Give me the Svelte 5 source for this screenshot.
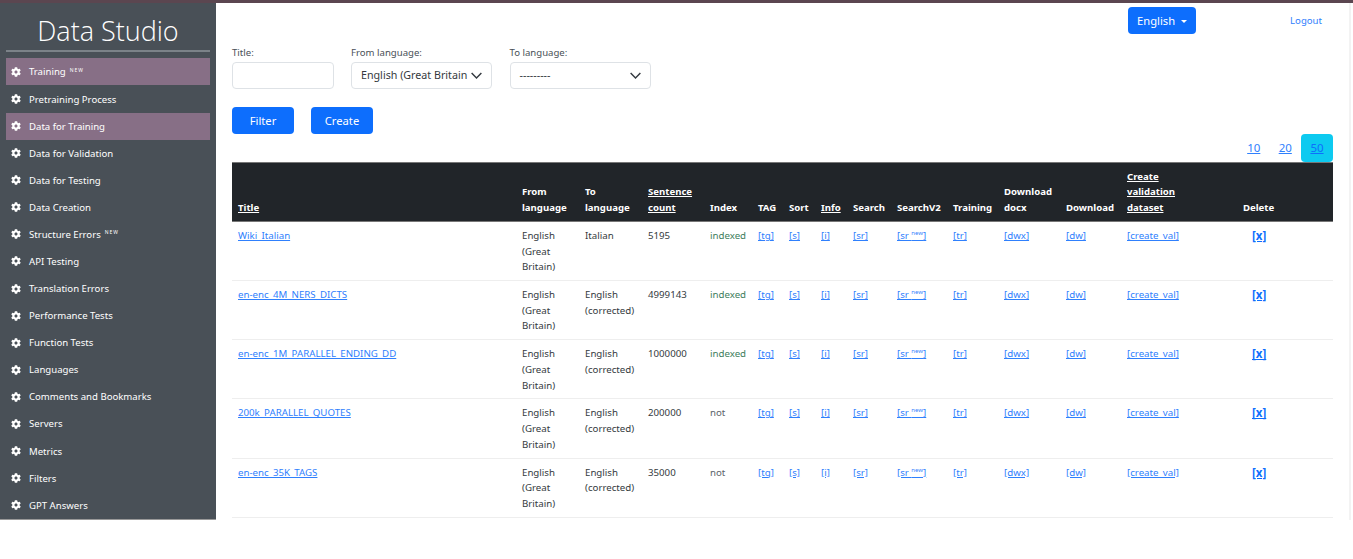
<script>
	const menu = [
		{ label: "Training", isNew: true, active: true },
		{ label: "Pretraining Process" },
		{ label: "Data for Training", active: true },
		{ label: "Data for Validation" },
		{ label: "Data for Testing" },
		{ label: "Data Creation" },
		{ label: "Structure Errors", isNew: true },
		{ label: "API Testing" },
		{ label: "Translation Errors" },
		{ label: "Performance Tests" },
		{ label: "Function Tests" },
		{ label: "Languages" },
		{ label: "Comments and Bookmarks" },
		{ label: "Servers" },
		{ label: "Metrics" },
		{ label: "Filters" },
		{ label: "GPT Answers" }
	]

	const rows = [
		{ title: "Wiki_Italian", to: ["Italian"], count: 5195, index: "indexed" },
		{ title: "en-enc_4M_NERS_DICTS", to: ["English", "(corrected)"], count: 4999143, index: "indexed" },
		{ title: "en-enc_1M_PARALLEL_ENDING_DD", to: ["English", "(corrected)"], count: 1000000, index: "indexed" },
		{ title: "200k_PARALLEL_QUOTES", to: ["English", "(corrected)"], count: 200000, index: "not" },
		{ title: "en-enc_35K_TAGS", to: ["English", "(corrected)"], count: 35000, index: "not" }
	]

	const cog = "M487.4 315.7l-42.6-24.6c4.3-23.2 4.3-47 0-70.2l42.6-24.6c4.9-2.8 7.1-8.6 5.5-14-11.1-35.6-30-67.8-54.7-94.6-3.8-4.1-10-5.1-14.8-2.3L380.8 110c-17.9-15.4-38.5-27.3-60.8-35.1V25.8c0-5.6-3.9-10.5-9.4-11.7-36.7-8.2-74.3-7.8-109.2 0-5.5 1.2-9.4 6.1-9.4 11.7V75c-22.2 7.9-42.8 19.8-60.8 35.1L88.7 85.5c-4.9-2.8-11-1.9-14.8 2.3-24.7 26.7-43.6 58.9-54.7 94.6-1.7 5.4.6 11.2 5.5 14L67.3 221c-4.3 23.2-4.3 47 0 70.2l-42.6 24.6c-4.9 2.8-7.1 8.6-5.5 14 11.1 35.6 30 67.8 54.7 94.6 3.8 4.1 10 5.1 14.8 2.3l42.6-24.6c17.9 15.4 38.5 27.3 60.8 35.1v49.2c0 5.6 3.9 10.5 9.4 11.7 36.7 8.2 74.3 7.8 109.2 0 5.5-1.2 9.4-6.1 9.4-11.7v-49.2c22.2-7.9 42.8-19.8 60.8-35.1l42.6 24.6c4.9 2.8 11 1.9 14.8-2.3 24.7-26.7 43.6-58.9 54.7-94.6 1.5-5.5-.7-11.3-5.6-14.1zM256 336c-44.1 0-80-35.9-80-80s35.9-80 80-80 80 35.9 80 80-35.9 80-80 80z"
</script>

<div class="page">
	<aside class="sidebar">
		<h1>Data Studio</h1>
		<nav>
			{#each menu as item}
				<a href="#top" class="item" class:active={item.active}>
					<svg viewBox="0 0 512 512" width="10" height="10"><path d={cog} fill="#fff" /></svg>
					<span>{item.label}</span>
					{#if item.isNew}<sup>NEW</sup>{/if}
				</a>
			{/each}
		</nav>
	</aside>

	<main>
		<div class="topbar">
			<button class="btn lang">English <i class="caret"></i></button>
			<a href="#top" class="logout">Logout</a>
		</div>

		<form class="filters">
			<label class="title-field">
				Title:
				<input type="text" />
			</label>
			<label class="select-field">
				From language:
				<span class="select"><span>English (Great Britain</span><svg viewBox="0 0 16 16" width="13" height="13"><path d="M2 5l6 6 6-6" /></svg></span>
			</label>
			<label class="select-field">
				To language:
				<span class="select"><span>---------</span><svg viewBox="0 0 16 16" width="13" height="13"><path d="M2 5l6 6 6-6" /></svg></span>
			</label>
		</form>

		<div class="actions">
			<button class="btn">Filter</button>
			<button class="btn">Create</button>
		</div>

		<div class="pager">
			<a href="#top">10</a>
			<a href="#top">20</a>
			<a href="#top" class="current">50</a>
		</div>

		<table>
			<colgroup>
				<col style="width: 284px" />
				<col style="width: 63px" />
				<col style="width: 63px" />
				<col style="width: 62px" />
				<col style="width: 48px" />
				<col style="width: 31px" />
				<col style="width: 32px" />
				<col style="width: 32px" />
				<col style="width: 44px" />
				<col style="width: 56px" />
				<col style="width: 51px" />
				<col style="width: 62px" />
				<col style="width: 61px" />
				<col style="width: 116px" />
				<col style="width: 96px" />
			</colgroup>
			<thead>
				<tr>
					<th><u>Title</u></th>
					<th>From language</th>
					<th>To language</th>
					<th><u>Sentence count</u></th>
					<th>Index</th>
					<th>TAG</th>
					<th>Sort</th>
					<th><u>Info</u></th>
					<th>Search</th>
					<th>SearchV2</th>
					<th>Training</th>
					<th>Download docx</th>
					<th>Download</th>
					<th class="narrow"><u>Create validation dataset</u></th>
					<th>Delete</th>
				</tr>
			</thead>
			<tbody>
				{#each rows as row}
					<tr>
						<td><a href="#top">{row.title}</a></td>
						<td>English<br />(Great<br />Britain)</td>
						<td>{#each row.to as part, i}{#if i > 0}<br />{/if}{part}{/each}</td>
						<td>{row.count}</td>
						<td class={row.index === "indexed" ? "indexed" : "not"}>{row.index}</td>
						<td><a href="#top">[tg]</a></td>
						<td><a href="#top">[s]</a></td>
						<td><a href="#top">[i]</a></td>
						<td><a href="#top">[sr]</a></td>
						<td><a href="#top">[sr <sup>new</sup>]</a></td>
						<td><a href="#top">[tr]</a></td>
						<td><a href="#top">[dwx]</a></td>
						<td><a href="#top">[dw]</a></td>
						<td><a href="#top">[create_val]</a></td>
						<td class="delete"><a href="#top">[x]</a></td>
					</tr>
				{/each}
			</tbody>
		</table>
	</main>
	<div class="track"></div>
</div>

<style>
	:global(body) {
		margin: 0;
		background: #fff;
		font-family: "Noto Sans", "Open Sans", sans-serif;
		color: #343a40;
	}
	.page {
		display: flex;
		height: 520px;
		border-top: 3px solid #5b4650;
		box-sizing: border-box;
		overflow: hidden;
	}
	.sidebar {
		width: 216px;
		flex: none;
		background: #495057;
		padding: 0 6px;
		box-sizing: border-box;
		border-bottom: 1px solid #999;
	}
	h1 {
		margin: 0;
		height: 47px;
		border-bottom: 2px solid #7b8288;
		font-size: 27px;
		font-weight: 300;
		font-family: "Open Sans", sans-serif;
		line-height: 56px;
		text-align: center;
		color: #fff;
	}
	nav {
		margin-top: 6.4px;
	}
	.item {
		display: flex;
		align-items: center;
		height: 27.08px;
		padding-left: 5px;
		font-size: 9.6px;
		color: #fff;
		text-decoration: none;
	}
	.item svg {
		margin-right: 8px;
	}
	.item sup {
		font-size: 5px;
		margin: -4px 0 0 4px;
		letter-spacing: 1px;
	}
	.item.active {
		background: #876f86;
	}
	main {
		flex: 1;
		min-width: 0;
		padding: 4px 16px 0 16px;
	}
	.track {
		flex: none;
		width: 2px;
		margin-right: 2px;
		background: #f3f3f3;
	}
	.topbar {
		display: flex;
		align-items: center;
		justify-content: flex-end;
		height: 27px;
		font-size: 9.6px;
	}
	.logout {
		color: #2f80fd;
		text-decoration: none;
		margin: 0 11px 0 94px;
	}
	.btn {
		height: 27px;
		width: 62px;
		padding: 0;
		border: 0;
		border-radius: 4px;
		background: #0d6efd;
		color: #fff;
		font: 11.2px "Noto Sans", sans-serif;
	}
	.lang {
		width: 68px;
	}
	.caret {
		display: inline-block;
		margin-left: 3px;
		vertical-align: 2px;
		border-top: 3px solid #fff;
		border-left: 3px solid transparent;
		border-right: 3px solid transparent;
	}
	.filters {
		display: flex;
		gap: 17.5px;
		margin-top: 12px;
		font-size: 9.6px;
		color: #495057;
	}
	label {
		display: flex;
		flex-direction: column;
		gap: 3px;
		line-height: 13px;
	}
	input,
	.select {
		height: 27px;
		box-sizing: border-box;
		border: 1px solid #dee2e6;
		border-radius: 4px;
		background: #fff;
	}
	.title-field input {
		width: 101.5px;
	}
	.select {
		display: flex;
		align-items: center;
		justify-content: space-between;
		width: 141px;
		padding: 0 8px 1px 9px;
		font-size: 10.7px;
		color: #343a40;
		white-space: nowrap;
	}
	.select svg {
		fill: none;
		stroke: #343a40;
		stroke-width: 1.8;
		flex: none;
	}
	.actions {
		display: flex;
		gap: 17px;
		margin-top: 18px;
	}
	.pager {
		display: flex;
		justify-content: flex-end;
		align-items: center;
		height: 28px;
		font-size: 11.5px;
	}
	.pager a {
		width: 31.5px;
		height: 28px;
		line-height: 28px;
		text-align: center;
		color: #2f80fd;
		border-radius: 4px;
	}
	.pager a.current {
		width: 32px;
		background: #0dcaf0;
		color: #0d6efd;
	}
	table {
		width: 1101px;
		table-layout: fixed;
		border-collapse: collapse;
		font-size: 9.7px;
		line-height: 15.6px;
	}
	th {
		background: #212529;
		color: #fff;
		padding: 6px;
		height: 59px;
		box-sizing: border-box;
		line-height: 15.4px;
		text-align: left;
		vertical-align: bottom;
		font-weight: 700;
		font-size: 9.6px;
		border-top: 1px solid #777;
		border-bottom: 1px solid #777;
	}
	th.narrow {
		padding-right: 50px;
	}
	td {
		padding: 6px 6px 5.3px;
		vertical-align: top;
		border-bottom: 1.5px solid #eee;
	}
	td a {
		color: #2f80fd;
	}
	td sup {
		font-size: 6px;
		line-height: 0;
	}
	.indexed {
		color: #3d7d5c;
	}
	.not {
		color: #5c636a;
	}
	.delete {
		padding-left: 15px;
		padding-top: 6px;
		padding-bottom: 5.3px;
	}
	.delete a {
		font-weight: 700;
		font-size: 11.5px;
		color: #0d6efd;
	}
</style>
